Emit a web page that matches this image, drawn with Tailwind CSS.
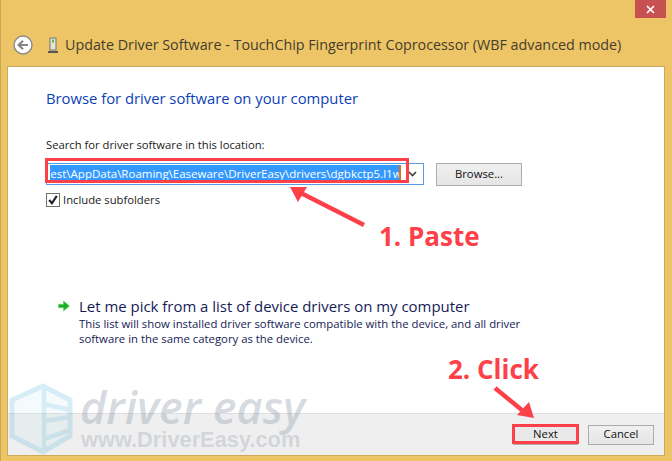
<!DOCTYPE html>
<html lang="en">
<head>
    <meta charset="UTF-8">
    <title>Update Driver Software</title>
    <script src="https://cdn.jsdelivr.net/npm/@tailwindcss/browser@4"></script>
</head>
<body class="m-0 overflow-hidden">
    <div class="relative w-[672px] h-[461px] bg-[#eec566] border-l border-[#c9a557] font-['Open_Sans',sans-serif] flex flex-col">
        <!-- title bar -->
        <div class="h-[66px] flex flex-col shrink-0">
            <div class="flex justify-end pr-[6px] h-[18px]">
                <div class="w-[31px] h-[18px] bg-[#c75050] flex items-center justify-center">
                    <svg class="w-[9px] h-[9px]" viewBox="0 0 9 9"><path d="M1 1l7 7M8 1l-7 7" stroke="#fff" stroke-width="1.7"/></svg>
                </div>
            </div>
            <div class="flex items-center mt-[17px] pl-[12px]">
                <svg class="w-[20px] h-[20px]" viewBox="0 0 20 20">
                    <circle cx="10" cy="10" r="9" fill="#fff" stroke="#8a8a8a" stroke-width="1.4"/>
                    <path d="M15 10H6M10 5.8L5.6 10l4.4 4.2" fill="none" stroke="#858585" stroke-width="2.2"/>
                </svg>
                <svg class="w-[12px] h-[16px] ml-[14px]" viewBox="0 0 12 16">
                    <rect x="3" y="1" width="6" height="12" fill="#e4e4dc" stroke="#77776c"/>
                    <rect x="5" y="2.5" width="2" height="3" fill="#4fc04f"/>
                    <rect x="1" y="14" width="10" height="2" fill="#55554d"/>
                </svg>
                <span class="ml-[6px] text-[14.3px] leading-[20px] text-[#433d2e] whitespace-nowrap">Update Driver Software - TouchChip Fingerprint Coprocessor (WBF advanced mode)</span>
            </div>
        </div>
        <!-- content panel -->
        <div class="ml-[6px] mr-[7px] mb-[5px] flex-1 border border-[#cda95a] bg-white flex flex-col">
            <div class="flex-1 pl-[38px] flex flex-col">
                <h1 class="mt-[20px] text-[14.8px] leading-[22px] text-[#0c3fb4] font-normal whitespace-nowrap">Browse for driver software on your computer</h1>
                <p class="mt-[28px] text-[11.25px] leading-[16px] text-[#1a1a1a] whitespace-nowrap">Search for driver software in this location:</p>
                <div class="mt-[8px] flex items-center">
                    <div class="w-[378px] h-[22px] border border-[#569de5] flex items-center pl-[3px] pr-[1px] gap-[1px]">
                        <div class="w-[351px] h-[17px] bg-[#3399ff] border-r-2 border-[#e0701a] text-white text-[11.5px] leading-[17px] overflow-hidden"><span class="block w-[356px] ml-[-6px] whitespace-nowrap">Test\AppData\Roaming\Easeware\DriverEasy\drivers\dgbkctp5.l1w</span></div>
                        <div class="flex-1 flex justify-center">
                            <svg class="w-[9px] h-[6px]" viewBox="0 0 9 6"><path d="M1 1l3.5 3.5L8 1" fill="none" stroke="#444" stroke-width="1.7"/></svg>
                        </div>
                    </div>
                    <div class="ml-[12px] mt-[2px] w-[86px] h-[23px] border border-[#acacac] bg-gradient-to-b from-[#f0f0f0] to-[#e5e5e5] flex items-center justify-center text-[11.3px] text-[#111]">Browse...</div>
                </div>
                <div class="mt-[6px] flex items-center">
                    <div class="w-[14px] h-[14px] border border-[#707070] flex items-center justify-center">
                        <svg class="w-[12px] h-[12px]" viewBox="0 0 11 11"><path d="M2 5.5l2.5 3L9 1.8" fill="none" stroke="#222" stroke-width="2"/></svg>
                    </div>
                    <span class="ml-[3px] text-[11.25px] leading-[16px] text-[#1a1a1a]">Include subfolders</span>
                </div>
                <div class="mt-[88px] flex ml-[12px]">
                    <svg class="w-[12px] h-[12px] mt-[4px] shrink-0" viewBox="0 0 12 12"><path d="M0.5 4.3h5V1L11.5 6l-6 5V7.7h-5z" fill="#1fae2c" stroke="#5fd765" stroke-width=".6"/></svg>
                    <div class="ml-[9px]">
                        <p class="text-[14.95px] leading-[20px] text-[#151c55] whitespace-nowrap">Let me pick from a list of device drivers on my computer</p>
                        <p class="w-[480px] text-[11.35px] leading-[15px] text-[#151c55]">This list will show installed driver software compatible with the device, and all driver software in the same category as the device.</p>
                    </div>
                </div>
            </div>
            <!-- footer -->
            <div class="h-[42px] shrink-0 bg-[#efefef] border-t border-[#dfdfdf] flex items-center justify-end pr-[10px] gap-[10px]">
                <div class="w-[65px] h-[20px] border border-[#acacac] bg-[#e9e9e9] flex items-center justify-center text-[11.3px] text-[#111]">Next</div>
                <div class="w-[66px] h-[20px] border border-[#acacac] bg-gradient-to-b from-[#f0f0f0] to-[#e5e5e5] flex items-center justify-center text-[11.3px] text-[#111]">Cancel</div>
            </div>
        </div>

        <!-- red annotations -->
        <div class="absolute left-[44px] top-[158px] w-[364px] h-[25px] border-[3px] border-[#fe4049]"></div>
        <div class="absolute left-[511px] top-[424px] w-[67px] h-[20px] border-[3px] border-[#fe4049]"></div>
        <svg class="absolute left-0 top-0 w-[672px] h-[461px]" viewBox="0 0 672 461">
            <path d="M363 225L298 192" stroke="#fe4049" stroke-width="4.5" fill="none"/>
            <path d="M289 187L306 187L297 202z" fill="#fe4049"/>
            <path d="M494 388L522 411" stroke="#fe4049" stroke-width="4.5" fill="none"/>
            <path d="M533 418L516 415L528 402z" fill="#fe4049"/>
        </svg>
        <span class="absolute left-[378px] top-[219px] text-[26px] leading-[34px] font-bold text-[#fe4049] whitespace-nowrap">1. Paste</span>
        <span class="absolute left-[447px] top-[352px] text-[26px] leading-[34px] font-bold text-[#fe4049] whitespace-nowrap">2. Click</span>

        <!-- watermark -->
        <svg class="absolute left-[7px] top-[383px] w-[66px] h-[72px] opacity-25" viewBox="0 0 66 72">
            <path d="M35 3L62 17V53L35 69L4 53V17z" fill="#a9e0f2" fill-opacity=".45" stroke="#5fb8dc" stroke-width="5"/>
            <path d="M36 4V68M36 21L62 27M36 38L62 34M36 56L62 47" stroke="#5fb8dc" stroke-width="4.5" fill="none"/>
        </svg>
        <span class="absolute left-[79px] top-[385px] text-[45px] leading-[43px] font-semibold italic text-[#8b98a6]/35 whitespace-nowrap">driver easy</span>
        <span class="absolute left-[80px] top-[428px] text-[21.8px] leading-[24px] font-bold text-[#8b98a6]/30 font-['Liberation_Sans',sans-serif] whitespace-nowrap">www.DriverEasy.com</span>
    </div>
</body>
</html>
